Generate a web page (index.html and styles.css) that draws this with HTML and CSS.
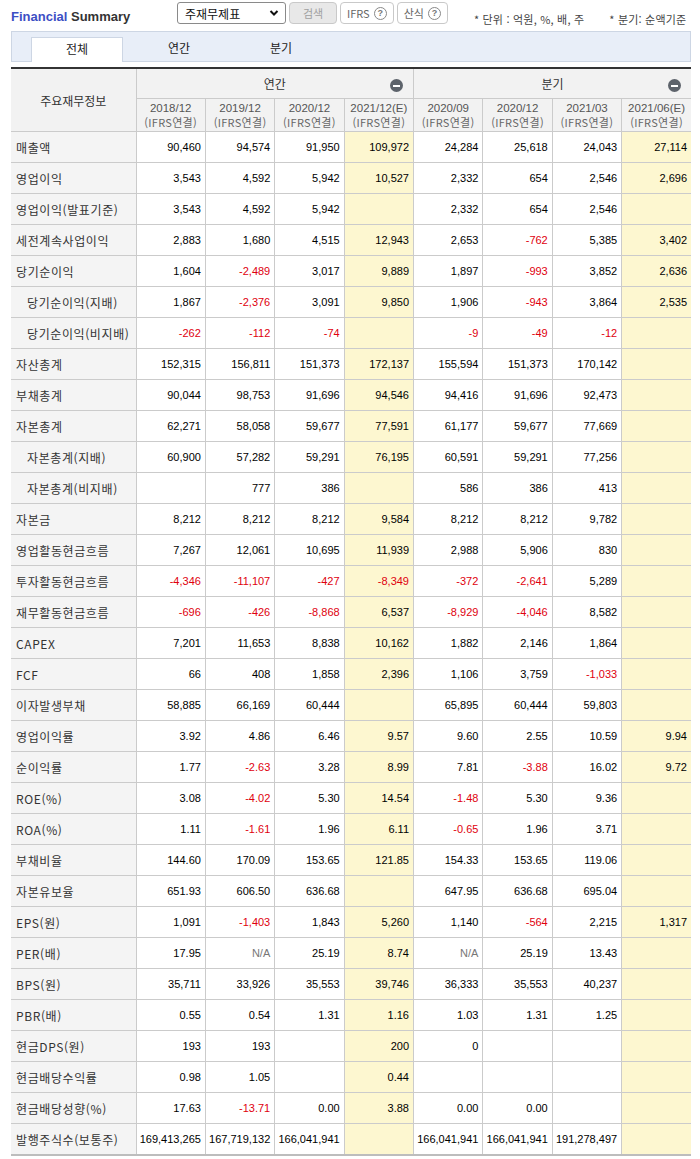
FILE: index.html
```html
<!DOCTYPE html>
<html lang="ko">
<head>
<meta charset="utf-8">
<title>Financial Summary</title>
<link rel="stylesheet" href="styles.css">
</head>
<body>
<div class="wrap">
  <div class="top">
    <h1 class="title"><span class="fin">Financial</span> Summary</h1>
    <div class="ctrls">
      <div class="sel"><span>주재무제표</span><svg class="chev" width="10" height="8" viewBox="0 0 10 8"><path d="M1.5 2 L5 5.5 L8.5 2" fill="none" stroke="#111" stroke-width="2"/></svg></div>
      <button class="btn dis">검색</button>
      <button class="btn">IFRS <span class="q">?</span></button>
      <button class="btn">산식 <span class="q">?</span></button>
    </div>
    <div class="unit">* 단위 : 억원, %, 배, 주</div>
    <div class="unit u2">* 분기: 순액기준</div>
  </div>
  <div class="tabs">
    <div class="tab on">전체</div>
    <div class="tab">연간</div>
    <div class="tab">분기</div>
  </div>
  <table class="fs">
    <colgroup><col class="cl"><col class="cd"><col class="cd"><col class="cd"><col class="cd"><col class="cd"><col class="cd"><col class="cd"><col class="cd"></colgroup>
    <thead>
      <tr class="h1">
        <th rowspan="2" class="lab">주요재무정보</th>
        <th colspan="4" class="grp"><div class="gin"><span></span><span class="gt">연간</span><span class="minus"></span></div></th>
        <th colspan="4" class="grp"><div class="gin"><span></span><span class="gt">분기</span><span class="minus"></span></div></th>
      </tr>
      <tr class="h2">
        <th>2018/12<br><span class="sub">(IFRS연결)</span></th>
        <th>2019/12<br><span class="sub">(IFRS연결)</span></th>
        <th>2020/12<br><span class="sub">(IFRS연결)</span></th>
        <th>2021/12(E)<br><span class="sub">(IFRS연결)</span></th>
        <th>2020/09<br><span class="sub">(IFRS연결)</span></th>
        <th>2020/12<br><span class="sub">(IFRS연결)</span></th>
        <th>2021/03<br><span class="sub">(IFRS연결)</span></th>
        <th>2021/06(E)<br><span class="sub">(IFRS연결)</span></th>
      </tr>
    </thead>
    <tbody id="tb">
      <tr><th>매출액</th><td>90,460</td><td>94,574</td><td>91,950</td><td class="e">109,972</td><td>24,284</td><td>25,618</td><td>24,043</td><td class="e">27,114</td></tr>
      <tr><th>영업이익</th><td>3,543</td><td>4,592</td><td>5,942</td><td class="e">10,527</td><td>2,332</td><td>654</td><td>2,546</td><td class="e">2,696</td></tr>
      <tr><th>영업이익(발표기준)</th><td>3,543</td><td>4,592</td><td>5,942</td><td class="e"></td><td>2,332</td><td>654</td><td>2,546</td><td class="e"></td></tr>
      <tr><th>세전계속사업이익</th><td>2,883</td><td>1,680</td><td>4,515</td><td class="e">12,943</td><td>2,653</td><td class="n">-762</td><td>5,385</td><td class="e">3,402</td></tr>
      <tr><th>당기순이익</th><td>1,604</td><td class="n">-2,489</td><td>3,017</td><td class="e">9,889</td><td>1,897</td><td class="n">-993</td><td>3,852</td><td class="e">2,636</td></tr>
      <tr><th class="ind">당기순이익(지배)</th><td>1,867</td><td class="n">-2,376</td><td>3,091</td><td class="e">9,850</td><td>1,906</td><td class="n">-943</td><td>3,864</td><td class="e">2,535</td></tr>
      <tr><th class="ind">당기순이익(비지배)</th><td class="n">-262</td><td class="n">-112</td><td class="n">-74</td><td class="e"></td><td class="n">-9</td><td class="n">-49</td><td class="n">-12</td><td class="e"></td></tr>
      <tr><th>자산총계</th><td>152,315</td><td>156,811</td><td>151,373</td><td class="e">172,137</td><td>155,594</td><td>151,373</td><td>170,142</td><td class="e"></td></tr>
      <tr><th>부채총계</th><td>90,044</td><td>98,753</td><td>91,696</td><td class="e">94,546</td><td>94,416</td><td>91,696</td><td>92,473</td><td class="e"></td></tr>
      <tr><th>자본총계</th><td>62,271</td><td>58,058</td><td>59,677</td><td class="e">77,591</td><td>61,177</td><td>59,677</td><td>77,669</td><td class="e"></td></tr>
      <tr><th class="ind">자본총계(지배)</th><td>60,900</td><td>57,282</td><td>59,291</td><td class="e">76,195</td><td>60,591</td><td>59,291</td><td>77,256</td><td class="e"></td></tr>
      <tr><th class="ind">자본총계(비지배)</th><td></td><td>777</td><td>386</td><td class="e"></td><td>586</td><td>386</td><td>413</td><td class="e"></td></tr>
      <tr><th>자본금</th><td>8,212</td><td>8,212</td><td>8,212</td><td class="e">9,584</td><td>8,212</td><td>8,212</td><td>9,782</td><td class="e"></td></tr>
      <tr><th>영업활동현금흐름</th><td>7,267</td><td>12,061</td><td>10,695</td><td class="e">11,939</td><td>2,988</td><td>5,906</td><td>830</td><td class="e"></td></tr>
      <tr><th>투자활동현금흐름</th><td class="n">-4,346</td><td class="n">-11,107</td><td class="n">-427</td><td class="e n">-8,349</td><td class="n">-372</td><td class="n">-2,641</td><td>5,289</td><td class="e"></td></tr>
      <tr><th>재무활동현금흐름</th><td class="n">-696</td><td class="n">-426</td><td class="n">-8,868</td><td class="e">6,537</td><td class="n">-8,929</td><td class="n">-4,046</td><td>8,582</td><td class="e"></td></tr>
      <tr><th>CAPEX</th><td>7,201</td><td>11,653</td><td>8,838</td><td class="e">10,162</td><td>1,882</td><td>2,146</td><td>1,864</td><td class="e"></td></tr>
      <tr><th>FCF</th><td>66</td><td>408</td><td>1,858</td><td class="e">2,396</td><td>1,106</td><td>3,759</td><td class="n">-1,033</td><td class="e"></td></tr>
      <tr><th>이자발생부채</th><td>58,885</td><td>66,169</td><td>60,444</td><td class="e"></td><td>65,895</td><td>60,444</td><td>59,803</td><td class="e"></td></tr>
      <tr><th>영업이익률</th><td>3.92</td><td>4.86</td><td>6.46</td><td class="e">9.57</td><td>9.60</td><td>2.55</td><td>10.59</td><td class="e">9.94</td></tr>
      <tr><th>순이익률</th><td>1.77</td><td class="n">-2.63</td><td>3.28</td><td class="e">8.99</td><td>7.81</td><td class="n">-3.88</td><td>16.02</td><td class="e">9.72</td></tr>
      <tr><th>ROE(%)</th><td>3.08</td><td class="n">-4.02</td><td>5.30</td><td class="e">14.54</td><td class="n">-1.48</td><td>5.30</td><td>9.36</td><td class="e"></td></tr>
      <tr><th>ROA(%)</th><td>1.11</td><td class="n">-1.61</td><td>1.96</td><td class="e">6.11</td><td class="n">-0.65</td><td>1.96</td><td>3.71</td><td class="e"></td></tr>
      <tr><th>부채비율</th><td>144.60</td><td>170.09</td><td>153.65</td><td class="e">121.85</td><td>154.33</td><td>153.65</td><td>119.06</td><td class="e"></td></tr>
      <tr><th>자본유보율</th><td>651.93</td><td>606.50</td><td>636.68</td><td class="e"></td><td>647.95</td><td>636.68</td><td>695.04</td><td class="e"></td></tr>
      <tr><th>EPS(원)</th><td>1,091</td><td class="n">-1,403</td><td>1,843</td><td class="e">5,260</td><td>1,140</td><td class="n">-564</td><td>2,215</td><td class="e">1,317</td></tr>
      <tr><th>PER(배)</th><td>17.95</td><td class="na">N/A</td><td>25.19</td><td class="e">8.74</td><td class="na">N/A</td><td>25.19</td><td>13.43</td><td class="e"></td></tr>
      <tr><th>BPS(원)</th><td>35,711</td><td>33,926</td><td>35,553</td><td class="e">39,746</td><td>36,333</td><td>35,553</td><td>40,237</td><td class="e"></td></tr>
      <tr><th>PBR(배)</th><td>0.55</td><td>0.54</td><td>1.31</td><td class="e">1.16</td><td>1.03</td><td>1.31</td><td>1.25</td><td class="e"></td></tr>
      <tr><th>현금DPS(원)</th><td>193</td><td>193</td><td></td><td class="e">200</td><td>0</td><td></td><td></td><td class="e"></td></tr>
      <tr><th>현금배당수익률</th><td>0.98</td><td>1.05</td><td></td><td class="e">0.44</td><td></td><td></td><td></td><td class="e"></td></tr>
      <tr><th>현금배당성향(%)</th><td>17.63</td><td class="n">-13.71</td><td>0.00</td><td class="e">3.88</td><td>0.00</td><td>0.00</td><td></td><td class="e"></td></tr>
      <tr><th>발행주식수(보통주)</th><td>169,413,265</td><td>167,719,132</td><td>166,041,941</td><td class="e"></td><td>166,041,941</td><td>166,041,941</td><td>191,278,497</td><td class="e"></td></tr>
    </tbody>
  </table>
</div>
</body>
</html>
```

FILE: styles.css
```css
html, body { margin: 0; padding: 0; background: #fff; }
body { font-family: "Liberation Sans", "Noto Sans CJK KR", sans-serif; color: #222; }
.wrap { width: 680px; padding-left: 11px; }

.top { display: flex; align-items: flex-start; height: 31px; }
.top > * { flex-shrink: 0; }
.title { margin: 9px 0 0 0; font-size: 13px; font-weight: bold; color: #333; width: 166px; white-space: nowrap; }
.fin { color: #3d4ec4; }
.ctrls { display: flex; gap: 3px; margin-top: 2px; }
.ctrls > * { flex-shrink: 0; white-space: nowrap; }
.sel { height: 20px; border: 1px solid #8a8a8a; border-radius: 3px; display: flex; align-items: center; justify-content: space-between; padding: 0 6px 0 7px; box-sizing: content-box; width: 94px; font-family: "Noto Sans CJK KR", sans-serif; font-size: 12px; color: #111; }
.chev { display: block; }
.btn { height: 22px; border: 1px solid #c9c9c9; border-radius: 4px; background: #fff; padding: 0 6px; font-family: "Noto Sans CJK KR", sans-serif; font-size: 11px; color: #666; display: flex; align-items: center; gap: 4px; margin: 0; }
.btn.dis { background: #e8e8e8; color: #a0a0a0; width: 48px; justify-content: center; }
.q { display: inline-flex; width: 11px; height: 11px; border: 1px solid #888; border-radius: 50%; align-items: center; justify-content: center; font-size: 9px; font-weight: bold; color: #777; line-height: 1; font-family: "Liberation Sans", sans-serif; }
.unit { font-family: "Noto Sans CJK KR", sans-serif; font-size: 11px; color: #444; margin-top: 11px; margin-left: 26px; white-space: nowrap; letter-spacing: 0.2px; }
.unit.u2 { margin-left: 25px; }

.tabs { height: 29px; background: #e8eef8; border: 1px solid #cdd6e4; display: flex; gap: 10px; padding-left: 19px; align-items: flex-end; }
.tab { width: 92px; height: 24px; text-align: center; font-family: "Noto Sans CJK KR", sans-serif; font-size: 12px; color: #222; line-height: 22px; box-sizing: border-box; }
.tab.on { background: #fff; border: 1px solid #cdd6e4; border-bottom: none; margin-bottom: -1px; height: 25px; }

.fs { margin-top: 5px; width: 680px; border-collapse: collapse; table-layout: fixed; border-top: 2px solid #333; border-bottom: 2px solid #bdbdbd; }
.cl { width: 125px; }
.fs th, .fs td { border: 1px solid #cbcbcb; padding: 0; }
.fs tr > :first-child { border-left: none; }
.fs tr > :last-child { border-right: none; }
.fs thead th { background: #f2f2f2; font-weight: normal; color: #444; text-align: center; }
.fs .h1 th { height: 29px; }
.fs .h1 th.lab { font-family: "Noto Sans CJK KR", sans-serif; font-size: 12px; color: #333; }
.gin { display: grid; grid-template-columns: 1fr auto 1fr; align-items: center; font-family: "Noto Sans CJK KR", sans-serif; font-size: 12px; color: #333; padding-right: 10px; padding-left: 10px; }
.minus { justify-self: end; width: 13px; height: 13px; border-radius: 50%; background: #5d636b; display: flex; align-items: center; justify-content: center; margin-top: 4px; }
.minus::before { content: ""; width: 7px; height: 2px; background: #fff; }
.fs .h2 th { height: 32px; font-size: 11.5px; line-height: 14px; color: #555; font-family: "Liberation Sans", "Noto Sans CJK KR", sans-serif; }
.sub { font-family: "Noto Sans CJK KR", sans-serif; font-size: 11px; color: #666; letter-spacing: 0.3px; }

.fs tbody th { background: #f4f4f4; text-align: left; font-weight: normal; font-family: "Noto Sans CJK KR", sans-serif; font-size: 12px; color: #333; padding-left: 5px; letter-spacing: 0.6px; height: 30px; white-space: nowrap; }
.fs tbody th.ind { padding-left: 16px; }
.fs tbody td { background: #fff; text-align: right; padding-right: 4px; font-size: 11px; color: #000; height: 30px; font-family: "Liberation Sans", sans-serif; }
.fs tbody td.e { background: #fdf7d0; }
.fs tbody td.n { color: #e0000e; }
.fs tbody td.na { color: #777; }
```
